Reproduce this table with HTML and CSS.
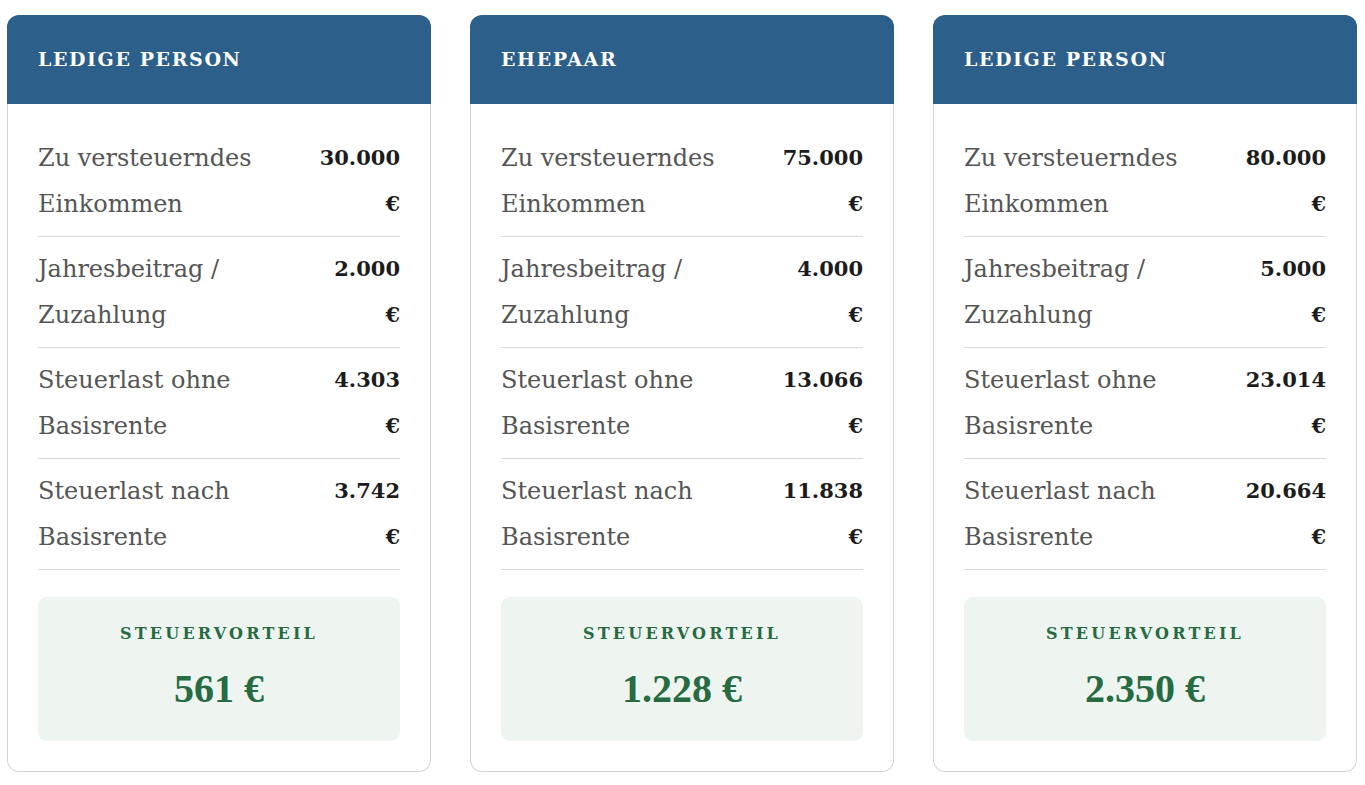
FILE: index.html
```html
<!DOCTYPE html>
<html lang="de">
<head>
<meta charset="utf-8">
<title>Steuervorteil Basisrente</title>
<link rel="stylesheet" href="styles.css">
</head>
<body>
<main class="cards">
  <section class="card">
    <header class="card-head">LEDIGE PERSON</header>
    <div class="card-body">
      <div class="row"><div class="label"><span>Zu versteuerndes</span><span>Einkommen</span></div><div class="value"><span>30.000</span><span>€</span></div></div>
      <div class="row"><div class="label"><span>Jahresbeitrag /</span><span>Zuzahlung</span></div><div class="value"><span>2.000</span><span>€</span></div></div>
      <div class="row"><div class="label"><span>Steuerlast ohne</span><span>Basisrente</span></div><div class="value"><span>4.303</span><span>€</span></div></div>
      <div class="row"><div class="label"><span>Steuerlast nach</span><span>Basisrente</span></div><div class="value"><span>3.742</span><span>€</span></div></div>
      <div class="benefit">
        <div class="benefit-title">STEUERVORTEIL</div>
        <div class="benefit-amount">561 €</div>
      </div>
    </div>
  </section>
  <section class="card">
    <header class="card-head">EHEPAAR</header>
    <div class="card-body">
      <div class="row"><div class="label"><span>Zu versteuerndes</span><span>Einkommen</span></div><div class="value"><span>75.000</span><span>€</span></div></div>
      <div class="row"><div class="label"><span>Jahresbeitrag /</span><span>Zuzahlung</span></div><div class="value"><span>4.000</span><span>€</span></div></div>
      <div class="row"><div class="label"><span>Steuerlast ohne</span><span>Basisrente</span></div><div class="value"><span>13.066</span><span>€</span></div></div>
      <div class="row"><div class="label"><span>Steuerlast nach</span><span>Basisrente</span></div><div class="value"><span>11.838</span><span>€</span></div></div>
      <div class="benefit">
        <div class="benefit-title">STEUERVORTEIL</div>
        <div class="benefit-amount">1.228 €</div>
      </div>
    </div>
  </section>
  <section class="card">
    <header class="card-head">LEDIGE PERSON</header>
    <div class="card-body">
      <div class="row"><div class="label"><span>Zu versteuerndes</span><span>Einkommen</span></div><div class="value"><span>80.000</span><span>€</span></div></div>
      <div class="row"><div class="label"><span>Jahresbeitrag /</span><span>Zuzahlung</span></div><div class="value"><span>5.000</span><span>€</span></div></div>
      <div class="row"><div class="label"><span>Steuerlast ohne</span><span>Basisrente</span></div><div class="value"><span>23.014</span><span>€</span></div></div>
      <div class="row"><div class="label"><span>Steuerlast nach</span><span>Basisrente</span></div><div class="value"><span>20.664</span><span>€</span></div></div>
      <div class="benefit">
        <div class="benefit-title">STEUERVORTEIL</div>
        <div class="benefit-amount">2.350 €</div>
      </div>
    </div>
  </section>
</main>
</body>
</html>
```
FILE: styles.css
```css
html, body {
  margin: 0;
  padding: 0;
  background: #ffffff;
}

body {
  font-family: "DejaVu Serif", "Liberation Serif", serif;
}

.cards {
  display: grid;
  grid-template-columns: repeat(3, 424px);
  column-gap: 39px;
  padding: 15px 8px 0 7px;
  align-items: start;
}

.card {
  display: flex;
  flex-direction: column;
}

.card-head {
  background: #2c5f8a;
  color: #ffffff;
  height: 89px;
  box-sizing: border-box;
  padding: 32px 31px 0;
  border-radius: 12px 12px 0 0;
  font-size: 19px;
  font-weight: bold;
  letter-spacing: 1.6px;
  line-height: 24px;
}

.card-body {
  border: 1px solid #d4d4d4;
  border-top: none;
  border-radius: 0 0 12px 12px;
  padding: 22px 30px 30px;
  display: flex;
  flex-direction: column;
}

.row {
  display: flex;
  justify-content: space-between;
  padding: 9px 0 9px;
  border-bottom: 1px solid #d9d9d9;
  line-height: 46px;
}

.label,
.value {
  display: flex;
  flex-direction: column;
}

.label {
  color: #555555;
  font-size: 24px;
}

.value {
  color: #1c1c1c;
  font-size: 21px;
  font-weight: bold;
  text-align: right;
  align-items: flex-end;
}

.benefit {
  margin-top: 27px;
  height: 144px;
  box-sizing: border-box;
  background: #eef5f1;
  border-radius: 9px;
  padding-top: 27px;
  text-align: center;
  color: #266b42;
}

.benefit-title {
  font-size: 16px;
  font-weight: bold;
  letter-spacing: 3.2px;
  line-height: 20px;
}

.benefit-amount {
  margin-top: 21px;
  font-family: "Liberation Serif", "DejaVu Serif", serif;
  font-size: 40px;
  font-weight: bold;
  line-height: 48px;
}
```
